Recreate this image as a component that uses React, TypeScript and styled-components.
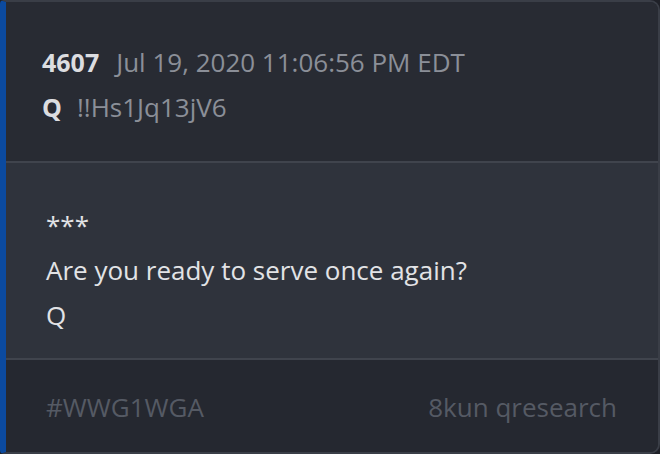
import React from 'react'
import styled, { createGlobalStyle } from 'styled-components'

const GlobalStyle = createGlobalStyle`
  html, body {
    margin: 0;
    padding: 0;
    background: #1f2128;
  }
  body {
    font-family: "Open Sans", "Noto Sans", sans-serif;
  }
`

const StyledCard = styled.article`
  box-sizing: border-box;
  width: 660px;
  height: 454px;
  display: flex;
  flex-direction: column;
  border: 2px solid #3a3e47;
  border-left: 6px solid #0b4a9f;
  border-radius: 4px 10px 10px 4px;
  overflow: hidden;
  background: #282b33;
`
const StyledHeader = styled.header`
  padding: 38px 36px 0;
  height: 161px;
  box-sizing: border-box;
  background: #282b33;
  border-bottom: 2px solid #40444d;
`
const StyledRow = styled.div<{ gap: number }>`
  display: flex;
  align-items: baseline;
  gap: ${p => p.gap}px;
  line-height: 45px;
`
const StyledStrong = styled.span`
  font-weight: 700;
  font-size: 25px;
  color: #dcdde0;
`
const StyledMuted = styled.span`
  font-size: 26px;
  font-weight: 400;
  color: #8b8f98;
`
const StyledBody = styled.section`
  flex: 1;
  padding: 40px 40px 0;
  background: #2f333c;
  border-bottom: 2px solid #40444d;
  color: #e2e3e6;
  font-size: 26px;
  line-height: 45px;
`
const StyledLine = styled.div``
const StyledFooter = styled.footer`
  height: 92px;
  box-sizing: border-box;
  padding: 25px 41px 0 40px;
  display: flex;
  justify-content: space-between;
  align-items: baseline;
  background: #252830;
  color: #555a64;
  font-size: 26px;
  line-height: 45px;
`

const App: React.FC = () => {
  return (
    <>
      <GlobalStyle />
      <StyledCard>
        <StyledHeader>
          <StyledRow gap={17}>
            <StyledStrong>4607</StyledStrong>
            <StyledMuted>Jul 19, 2020 11:06:56 PM EDT</StyledMuted>
          </StyledRow>
          <StyledRow gap={15}>
            <StyledStrong>Q</StyledStrong>
            <StyledMuted>!!Hs1Jq13jV6</StyledMuted>
          </StyledRow>
        </StyledHeader>
        <StyledBody>
          <StyledLine>***</StyledLine>
          <StyledLine>Are you ready to serve once again?</StyledLine>
          <StyledLine>Q</StyledLine>
        </StyledBody>
        <StyledFooter>
          <span>#WWG1WGA</span>
          <span>8kun qresearch</span>
        </StyledFooter>
      </StyledCard>
    </>
  )
}

export default App
